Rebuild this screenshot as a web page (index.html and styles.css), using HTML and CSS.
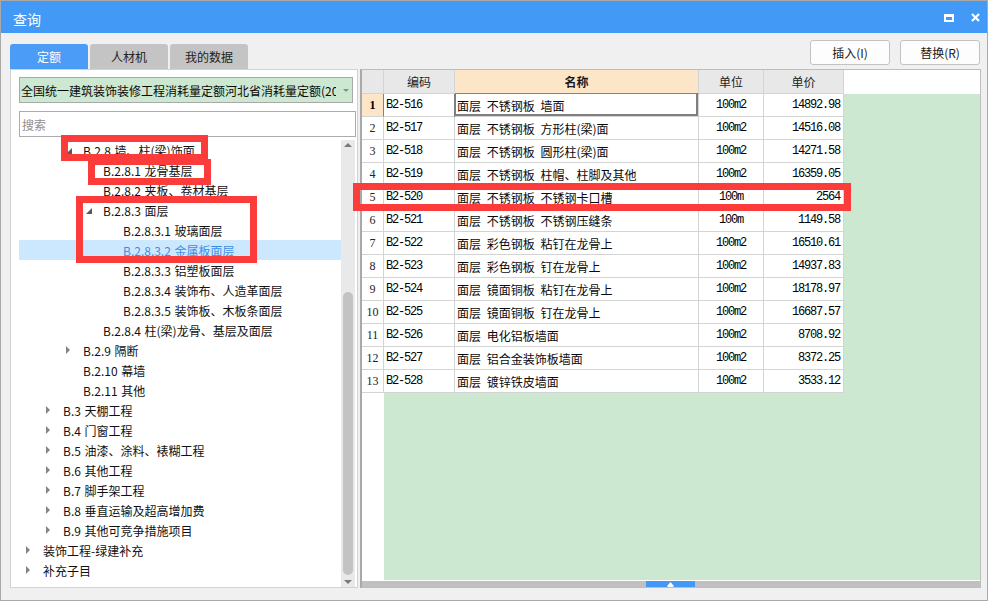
FILE: index.html
```html
<!DOCTYPE html>
<html lang="zh-CN">
<head>
<meta charset="utf-8">
<title>查询</title>
<link rel="stylesheet" href="styles.css">
</head>
<body>
<div class="window">
  <div class="titlebar">
    <span class="title">查询</span>
    <div class="tb-icons">
      <svg width="10" height="8" viewBox="0 0 10 8"><path d="M0 0H10V8H0Z M2 3V6H8V3Z" fill="#fff" fill-rule="evenodd"/></svg>
      <svg width="9" height="9" viewBox="0 0 9 9"><path d="M1 1L8 8M8 1L1 8" stroke="#fff" stroke-width="2.2"/></svg>
    </div>
  </div>
  <div class="content">
    <div class="toprow">
      <div class="tabs">
        <div class="tab active">定额</div>
        <div class="tab">人材机</div>
        <div class="tab">我的数据</div>
      </div>
      <div class="buttons">
        <button class="btn">插入(I)</button>
        <button class="btn">替换(R)</button>
      </div>
    </div>
    <div class="main">
      <div class="left">
        <div class="combo">
          <span class="combo-text">全国统一建筑装饰装修工程消耗量定额河北省消耗量定额(20</span>
          <svg class="combo-arrow" width="6" height="3" viewBox="0 0 6 3"><path d="M0 0H6L3 3Z" fill="#8a8a8a"/></svg>
        </div>
        <div class="search">搜索</div>
        <div class="tree-wrap">
          <div class="tree">
            <div class="row l2"><span class="exp"><svg class="open" width="6" height="6" viewBox="0 0 6 6"><path d="M6 0V6H0Z" fill="#595959"/></svg></span>B.2.8 墙、柱(梁)饰面</div>
            <div class="row l3"><span class="exp"></span>B.2.8.1 龙骨基层</div>
            <div class="row l3"><span class="exp"></span>B.2.8.2 夹板、卷材基层</div>
            <div class="row l3"><span class="exp"><svg class="open" width="6" height="6" viewBox="0 0 6 6"><path d="M6 0V6H0Z" fill="#595959"/></svg></span>B.2.8.3 面层</div>
            <div class="row l4"><span class="exp"></span>B.2.8.3.1 玻璃面层</div>
            <div class="row l4 sel"><span class="exp"></span>B.2.8.3.2 金属板面层</div>
            <div class="row l4"><span class="exp"></span>B.2.8.3.3 铝塑板面层</div>
            <div class="row l4"><span class="exp"></span>B.2.8.3.4 装饰布、人造革面层</div>
            <div class="row l4"><span class="exp"></span>B.2.8.3.5 装饰板、木板条面层</div>
            <div class="row l3"><span class="exp"></span>B.2.8.4 柱(梁)龙骨、基层及面层</div>
            <div class="row l2"><span class="exp"><svg width="5" height="8" viewBox="0 0 5 8"><path d="M0 0L4 4L0 8Z" fill="#858585"/></svg></span>B.2.9 隔断</div>
            <div class="row l2"><span class="exp"></span>B.2.10 幕墙</div>
            <div class="row l2"><span class="exp"></span>B.2.11 其他</div>
            <div class="row l1"><span class="exp"><svg width="5" height="8" viewBox="0 0 5 8"><path d="M0 0L4 4L0 8Z" fill="#858585"/></svg></span>B.3 天棚工程</div>
            <div class="row l1"><span class="exp"><svg width="5" height="8" viewBox="0 0 5 8"><path d="M0 0L4 4L0 8Z" fill="#858585"/></svg></span>B.4 门窗工程</div>
            <div class="row l1"><span class="exp"><svg width="5" height="8" viewBox="0 0 5 8"><path d="M0 0L4 4L0 8Z" fill="#858585"/></svg></span>B.5 油漆、涂料、裱糊工程</div>
            <div class="row l1"><span class="exp"><svg width="5" height="8" viewBox="0 0 5 8"><path d="M0 0L4 4L0 8Z" fill="#858585"/></svg></span>B.6 其他工程</div>
            <div class="row l1"><span class="exp"><svg width="5" height="8" viewBox="0 0 5 8"><path d="M0 0L4 4L0 8Z" fill="#858585"/></svg></span>B.7 脚手架工程</div>
            <div class="row l1"><span class="exp"><svg width="5" height="8" viewBox="0 0 5 8"><path d="M0 0L4 4L0 8Z" fill="#858585"/></svg></span>B.8 垂直运输及超高增加费</div>
            <div class="row l1"><span class="exp"><svg width="5" height="8" viewBox="0 0 5 8"><path d="M0 0L4 4L0 8Z" fill="#858585"/></svg></span>B.9 其他可竞争措施项目</div>
            <div class="row l0"><span class="exp"><svg width="5" height="8" viewBox="0 0 5 8"><path d="M0 0L4 4L0 8Z" fill="#858585"/></svg></span>装饰工程-绿建补充</div>
            <div class="row l0"><span class="exp"><svg width="5" height="8" viewBox="0 0 5 8"><path d="M0 0L4 4L0 8Z" fill="#858585"/></svg></span>补充子目</div>
          </div>
          <div class="vscroll">
            <svg class="up" width="8" height="4" viewBox="0 0 8 4"><path d="M0 4L4 0L8 4Z" fill="#7a7a7a"/></svg>
            <div class="thumb"></div>
            <svg class="down" width="8" height="4" viewBox="0 0 8 4"><path d="M0 0L4 4L8 0Z" fill="#7a7a7a"/></svg>
          </div>
        </div>
      </div>
      <div class="grid">
        <div class="gt">
          <div class="c h"></div><div class="c h">编码</div><div class="c h name">名称</div><div class="c h">单位</div><div class="c h">单价</div><div class="c hblank"></div>

          <div class="c rn cur">1</div><div class="c code">B2-516</div><div class="c nm cur">面层 不锈钢板 墙面</div><div class="c unit">100m2</div><div class="c price">14892.98</div><i></i>
          <div class="c rn">2</div><div class="c code">B2-517</div><div class="c nm">面层 不锈钢板 方形柱(梁)面</div><div class="c unit">100m2</div><div class="c price">14516.08</div><i></i>
          <div class="c rn">3</div><div class="c code">B2-518</div><div class="c nm">面层 不锈钢板 圆形柱(梁)面</div><div class="c unit">100m2</div><div class="c price">14271.58</div><i></i>
          <div class="c rn">4</div><div class="c code">B2-519</div><div class="c nm">面层 不锈钢板 柱帽、柱脚及其他</div><div class="c unit">100m2</div><div class="c price">16359.05</div><i></i>
          <div class="c rn">5</div><div class="c code">B2-520</div><div class="c nm">面层 不锈钢板 不锈钢卡口槽</div><div class="c unit">100m</div><div class="c price">2564</div><i></i>
          <div class="c rn">6</div><div class="c code">B2-521</div><div class="c nm">面层 不锈钢板 不锈钢压缝条</div><div class="c unit">100m</div><div class="c price">1149.58</div><i></i>
          <div class="c rn">7</div><div class="c code">B2-522</div><div class="c nm">面层 彩色钢板 粘钉在龙骨上</div><div class="c unit">100m2</div><div class="c price">16510.61</div><i></i>
          <div class="c rn">8</div><div class="c code">B2-523</div><div class="c nm">面层 彩色钢板 钉在龙骨上</div><div class="c unit">100m2</div><div class="c price">14937.83</div><i></i>
          <div class="c rn">9</div><div class="c code">B2-524</div><div class="c nm">面层 镜面铜板 粘钉在龙骨上</div><div class="c unit">100m2</div><div class="c price">18178.97</div><i></i>
          <div class="c rn">10</div><div class="c code">B2-525</div><div class="c nm">面层 镜面铜板 钉在龙骨上</div><div class="c unit">100m2</div><div class="c price">16687.57</div><i></i>
          <div class="c rn">11</div><div class="c code">B2-526</div><div class="c nm">面层 电化铝板墙面</div><div class="c unit">100m2</div><div class="c price">8708.92</div><i></i>
          <div class="c rn">12</div><div class="c code">B2-527</div><div class="c nm">面层 铝合金装饰板墙面</div><div class="c unit">100m2</div><div class="c price">8372.25</div><i></i>
          <div class="c rn">13</div><div class="c code">B2-528</div><div class="c nm">面层 镀锌铁皮墙面</div><div class="c unit">100m2</div><div class="c price">3533.12</div><i></i>

          <div class="fill-rn"></div><div class="fill-rest"></div>
        </div>
        <div class="hscroll">
          <div class="hthumb"><svg width="7" height="5" viewBox="0 0 7 5"><path d="M3.5 0L6 3H1Z M0.5 3H6.5V5H0.5Z" fill="#fff"/></svg></div>
        </div>
      </div>
    </div>
  </div>
</div>
<div class="mark m1"></div>
<div class="mark m2"></div>
<div class="mark m3"></div>
<div class="mark m4"></div>
</body>
</html>
```
FILE: styles.css
```css
* { box-sizing: border-box; }
html, body { margin: 0; padding: 0; background: #fff; }
body {
  width: 988px;
  height: 604px;
  overflow: hidden;
  font-family: "Noto Sans CJK SC", "Noto Sans", sans-serif;
  font-size: 12px;
  color: #111;
}
.window {
  width: 988px;
  height: 601px;
  border: 1px solid #a9a9a9;
  display: flex;
  flex-direction: column;
  background: #f0f0f0;
}
.titlebar {
  height: 32px;
  flex: none;
  background: #4399f6;
  color: #fff;
  display: flex;
  align-items: center;
  justify-content: space-between;
  padding: 0 7px 0 12px;
}
.title { font-size: 14px; line-height: 16px; margin-top: 4px; }
.tb-icons { display: flex; align-items: center; gap: 17px; margin-top: 1px; }
.tb-icons svg { display: block; }

.content {
  flex: 1;
  display: flex;
  flex-direction: column;
  padding: 0 6px 12px 9px;
}
.toprow { height: 36px; flex: none; display: flex; justify-content: space-between; }
.tabs { display: flex; gap: 2px; align-self: flex-end; }
.tab {
  width: 78px;
  height: 25px;
  display: flex;
  align-items: center;
  justify-content: center;
  background: #c4c4c4;
  border-radius: 3px 3px 0 0;
  color: #222;
}
.tab.active { background: #4a9cf6; color: #fff; }
.buttons { display: flex; gap: 10px; margin-top: 7px; margin-right: 1px; }
.btn {
  width: 80px;
  height: 25px;
  padding: 0;
  border: 1px solid #c2c2c2;
  border-radius: 3px;
  background: #fdfdfd;
  font-family: inherit;
  font-size: 12px;
  color: #1a1a1a;
}

.main { height: 519px; flex: none; display: flex; }
.left {
  width: 348px;
  border: 1px solid #d2d2d2;
  background: #fff;
  display: flex;
  flex-direction: column;
  padding: 7px 0 0 8px;
}
.combo {
  width: 334px;
  height: 26px;
  flex: none;
  border: 1px solid #a9a9a9;
  background: #cde8d0;
  display: flex;
  align-items: center;
  padding-left: 1px;
}
.combo-text { width: 315px; overflow: hidden; white-space: nowrap; color: #0a0a0a; }
.combo-arrow { margin-left: auto; margin-right: 3px; display: block; }
.search {
  margin-top: 8px;
  width: 337px;
  height: 26px;
  flex: none;
  border: 1px solid #acacac;
  color: #8e8e8e;
  padding-left: 2px;
  display: flex;
  align-items: center;
}
.tree-wrap { margin-top: 3px; width: 336px; height: 447px; flex: none; display: flex; }
.tree { flex: 1; }
.row {
  height: 20px;
  display: flex;
  align-items: center;
  white-space: nowrap;
  word-spacing: 1px;
  color: #111;
}
.row.sel { background: #cce8ff; color: #3a8ee6; }
.exp { width: 18px; flex: none; display: flex; align-items: center; padding-left: 1px; }
.exp svg { display: block; }
.exp .open { margin-top: 2px; }
.l0 { padding-left: 6px; }
.l1 { padding-left: 26px; }
.l2 { padding-left: 46px; }
.l3 { padding-left: 66px; }
.l4 { padding-left: 86px; }

.vscroll {
  width: 14px;
  flex: none;
  background: #e9e9e9;
  display: flex;
  flex-direction: column;
  align-items: center;
}
.vscroll svg { display: block; }
.vscroll .up { margin-top: 3px; }
.thumb { width: 10px; height: 283px; margin-top: 145px; background: #c3c3c3; border-radius: 5px; }
.vscroll .down { margin-top: 5px; }

.grid {
  margin-left: 2px;
  width: 621px;
  border: 1px solid #bdbdbd;
  border-left: 2px solid #a9a9a9;
  background: #cde8d0;
  display: flex;
  flex-direction: column;
}
.gt {
  flex: 1;
  display: grid;
  grid-template-columns: 22px 71px 244px 65px 80px 1fr;
  grid-template-rows: 24px repeat(13, 23px) 1fr;
}
.c {
  background: #fff;
  border-right: 1px solid #d4d4d4;
  border-bottom: 1px solid #d4d4d4;
  display: flex;
  align-items: center;
  white-space: nowrap;
  overflow: hidden;
}
.h { background: #e8e8e8; justify-content: center; color: #222; }
.h.name { background: #fde6c8; font-weight: bold; color: #1a1a1a; border-bottom-color: #3d8fef; }
.hblank { background: #fff; border: none; }
.rn { justify-content: center; font-family: "Liberation Serif", serif; font-size: 12px; color: #222; }
.rn.cur { background: #fde6c8; font-weight: bold; color: #000; border-right-color: #3d8fef; }
.code, .unit, .price {
  font-family: "Liberation Mono", monospace;
  font-size: 12px;
  letter-spacing: -1.2px;
  color: #000;
}
.code { padding-left: 2px; }
.nm { padding-left: 2px; word-spacing: 3px; color: #0a0a0a; }
.nm.cur {
  box-shadow: -1px 0 0 #7f7f7f, inset 1px 0 0 #7f7f7f, inset -2px 0 0 #7f7f7f, inset 0 -2px 0 #7f7f7f;
}
.unit { justify-content: center; }
.price { justify-content: flex-end; padding-right: 3px; }
.fill-rn { background: #fff; border-bottom: 1px solid #fff; }
.fill-rest { grid-column: 2 / 7; border-bottom: 1px solid #fff; }
.hscroll { height: 6px; flex: none; background: #c0c0c0; display: flex; }
.hthumb {
  margin-left: 284px;
  width: 49px;
  height: 6px;
  background: #4499f6;
  display: flex;
  align-items: flex-end;
  justify-content: center;
}
.hthumb svg { display: block; }

.mark { position: absolute; border: 7px solid #fc3b3b; }
.m1 { left: 61px; top: 135px; width: 147px; height: 26px; }
.m2 { left: 88px; top: 159px; width: 123px; height: 26px; border-top-width: 6px; }
.m3 { left: 76px; top: 196px; width: 181px; height: 67px; }
.m4 { left: 353px; top: 183px; width: 498px; height: 28px; }
```
